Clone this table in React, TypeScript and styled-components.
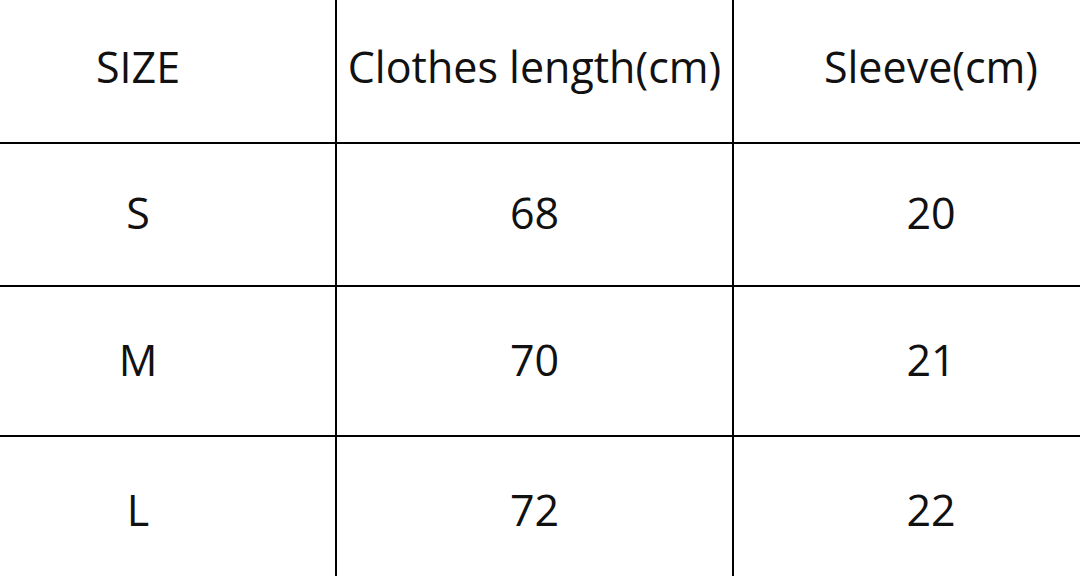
import * as React from "react";
import styled, { createGlobalStyle } from "styled-components";

const GlobalStyle = createGlobalStyle`
  html, body {
    margin: 0;
    padding: 0;
    background: #ffffff;
  }
`;

const Frame = styled.div`
  width: 1080px;
  height: 576px;
  overflow: hidden;
  background: #ffffff;
`;

const SizeTable = styled.table`
  width: 1187px;
  margin-left: -59px;
  border-collapse: separate;
  border-spacing: 0;
  table-layout: fixed;
  font-family: "Open Sans", "DejaVu Sans", sans-serif;
  font-size: 43px;
  color: #111111;
`;

const Row = styled.tr<{ $height: number; $first?: boolean }>`
  height: ${(p) => p.$height}px;

  & > td {
    border-top: ${(p) => (p.$first ? "none" : "2px solid #000")};
  }
`;

const Cell = styled.td<{ $header?: boolean }>`
  padding: 0 0 ${(p) => (p.$header ? 10 : 4)}px 0;
  text-align: center;
  vertical-align: middle;
  white-space: nowrap;

  & + & {
    border-left: 2px solid #000;
  }
`;

const ColumnSet = styled.colgroup``;

const widths = [394, 397, 396];

const rows = [
  { cells: ["SIZE", "Clothes length(cm)", "Sleeve(cm)"], height: 142 },
  { cells: ["S", "68", "20"], height: 143 },
  { cells: ["M", "70", "21"], height: 150 },
  { cells: ["L", "72", "22"], height: 150 },
];

export default function App() {
  return (
    <>
      <GlobalStyle />
      <Frame>
        <SizeTable>
          <ColumnSet>
            {widths.map((w, i) => (
              <col key={i} style={{ width: w }} />
            ))}
          </ColumnSet>
          <tbody>
            {rows.map((row, i) => (
              <Row key={i} $height={row.height} $first={i === 0}>
                {row.cells.map((text, j) => (
                  <Cell key={j} $header={i === 0}>
                    {text}
                  </Cell>
                ))}
              </Row>
            ))}
          </tbody>
        </SizeTable>
      </Frame>
    </>
  );
}
